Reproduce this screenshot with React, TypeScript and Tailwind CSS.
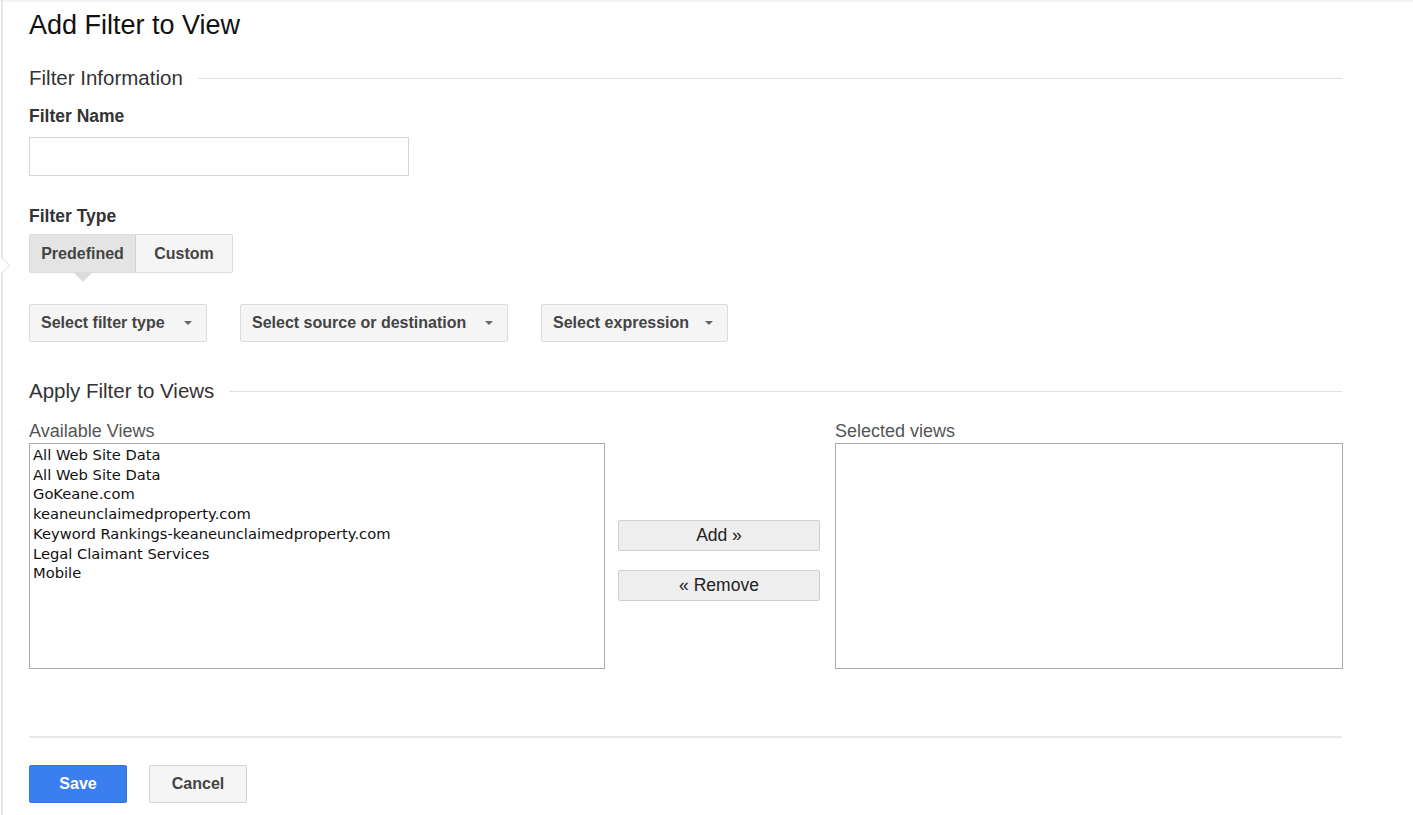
const VIEWS = [
  'All Web Site Data',
  'All Web Site Data',
  'GoKeane.com',
  'keaneunclaimedproperty.com',
  'Keyword Rankings-keaneunclaimedproperty.com',
  'Legal Claimant Services',
  'Mobile',
]

function Caret() {
  return (
    <svg width="8" height="4" viewBox="0 0 8 4" className="ml-auto">
      <path d="M0 0h8L4 4z" fill="#666" />
    </svg>
  )
}

function Dropdown({ label, width }: { label: string; width: string }) {
  return (
    <button
      className={`${width} h-[38px] flex items-center pl-[11px] pr-[14px] bg-[#f5f5f5] border border-[#dcdcdc] rounded-[2px] text-[16px] font-bold text-[#444]`}
    >
      <span>{label}</span>
      <Caret />
    </button>
  )
}

function SectionHeading({ title }: { title: string }) {
  return (
    <div className="flex items-center gap-[15px] h-[24px]">
      <span className="text-[20.5px] text-[#333] whitespace-nowrap">{title}</span>
      <div className="flex-1 border-t border-[#e0e0e0]" />
    </div>
  )
}

export default function App() {
  return (
    <div
      className="w-[1413px] h-[815px] bg-white overflow-hidden relative"
      style={{ fontFamily: '"Liberation Sans", Arial, sans-serif' }}
    >
      <div className="absolute left-0 top-0 right-0 h-[2px] bg-[#f4f4f4]" />
      <div className="ml-[1px] h-full border-l-2 border-[#e6e6e6] relative">
        {/* notch pointing right */}
        <div className="absolute left-[-6px] top-[260px] w-[11px] h-[11px] rotate-45 bg-white border-t border-r border-[#e6e6e6]" />

        <div className="pl-[26px] w-[1339px] pt-[10px]">
          <h1 className="text-[27px] leading-[30px] text-[#111]">Add Filter to View</h1>

          <div className="mt-[26px]">
            <SectionHeading title="Filter Information" />
          </div>

          <div className="mt-[16px] text-[17.5px] leading-[20px] font-bold text-[#333]">Filter Name</div>
          <input className="mt-[11px] block w-[380px] h-[39px] border border-[#d5d5d5] outline-none" />

          <div className="mt-[30px] text-[17.5px] leading-[20px] font-bold text-[#333]">Filter Type</div>
          <div className="mt-[8px] flex w-fit border border-[#dcdcdc] rounded-[2px] relative">
            <div className="w-[106px] h-[37px] flex items-center justify-center bg-[#e4e4e4] border-r border-[#d0d0d0] text-[16px] font-bold text-[#444]">
              Predefined
            </div>
            <div className="w-[96px] h-[37px] flex items-center justify-center bg-[#f5f5f5] text-[16px] font-bold text-[#444]">
              Custom
            </div>
            <div className="absolute left-[43px] top-[37px] w-0 h-0 border-l-[10px] border-r-[10px] border-t-[10px] border-l-transparent border-r-transparent border-t-[#dcdcdc]" />
          </div>

          <div className="mt-[31px] flex gap-[33px]">
            <Dropdown label="Select filter type" width="w-[178px]" />
            <Dropdown label="Select source or destination" width="w-[268px]" />
            <Dropdown label="Select expression" width="w-[187px]" />
          </div>

          <div className="mt-[37px]">
            <SectionHeading title="Apply Filter to Views" />
          </div>

          <div className="mt-[18px] flex items-start">
            <div>
              <div className="text-[18px] leading-[20px] text-[#555]">Available Views</div>
              <div className="mt-[2px] w-[576px] h-[226px] border border-[#a9a9a9] px-[3px] pt-[1px] text-[14.7px] leading-[19.7px] text-[#111]" style={{ fontFamily: '"DejaVu Sans", sans-serif' }}>
                {VIEWS.map((v, i) => (
                  <div key={i}>{v}</div>
                ))}
              </div>
            </div>

            <div className="ml-[13px] mt-[99px] flex flex-col gap-[19px]">
              <button className="w-[202px] h-[31px] bg-[#eeeeee] border border-[#cfcfcf] rounded-[2px] text-[17.5px] text-[#222]">
                Add »
              </button>
              <button className="w-[202px] h-[31px] bg-[#eeeeee] border border-[#cfcfcf] rounded-[2px] text-[17.5px] text-[#222]">
                « Remove
              </button>
            </div>

            <div className="ml-[15px]">
              <div className="text-[18px] leading-[20px] text-[#555]">Selected views</div>
              <div className="mt-[2px] w-[508px] h-[226px] border border-[#a9a9a9]" />
            </div>
          </div>

          <div className="mt-[67px] border-t-2 border-[#e8e8e8]" />

          <div className="mt-[27px] flex gap-[22px]">
            <button className="w-[98px] h-[38px] bg-[#3b7ef0] border border-[#3574e0] rounded-[2px] text-white text-[16px] font-bold">
              Save
            </button>
            <button className="w-[98px] h-[38px] bg-[#f5f5f5] border border-[#d5d5d5] rounded-[2px] text-[#444] text-[16px] font-bold">
              Cancel
            </button>
          </div>
        </div>
      </div>
    </div>
  )
}
